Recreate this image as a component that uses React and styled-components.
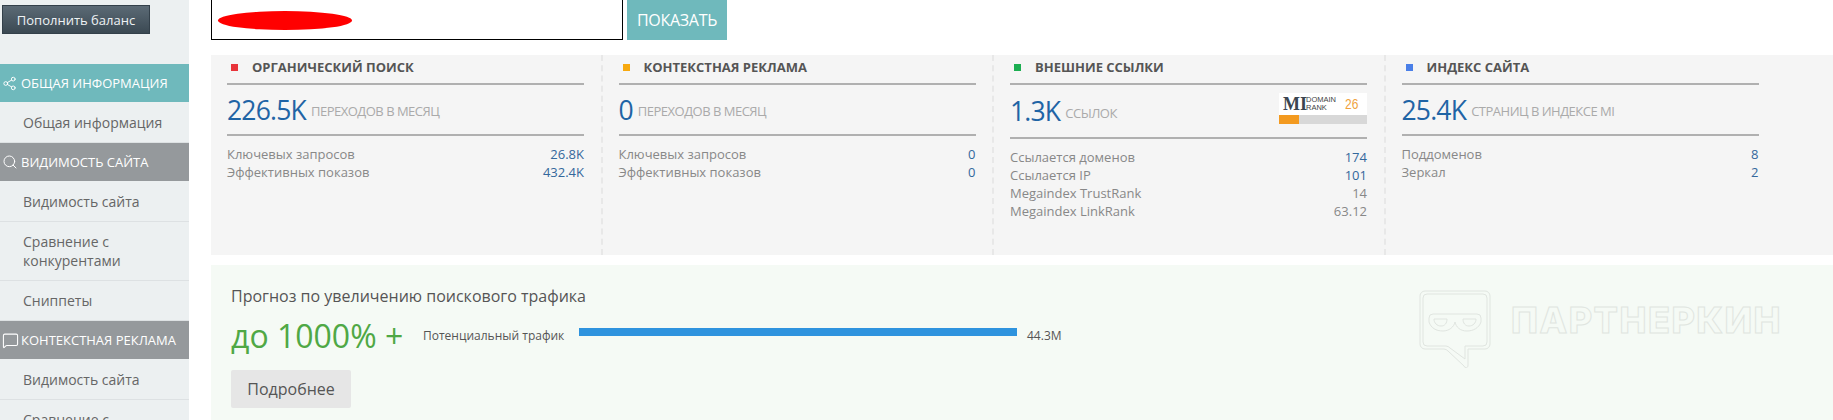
import React from 'react'
import styled, { createGlobalStyle } from 'styled-components'
import { Share2, Search, MessageSquare } from 'lucide-react'

const GlobalStyle = createGlobalStyle`
  html, body {
    margin: 0;
    height: 420px;
    overflow: hidden;
    background: #fff;
    font-family: "Open Sans", "Liberation Sans", sans-serif;
  }
  * { box-sizing: border-box; }
`

const Page = styled.div`
  display: flex;
  width: 1833px;
  height: 420px;
  overflow: hidden;
`

const Sidebar = styled.aside`
  width: 189px;
  flex-shrink: 0;
  background: #ecf0f1;
  padding-top: 5px;
`

const BalanceButton = styled.button`
  display: block;
  width: 148px;
  height: 29px;
  margin: 0 0 30px 2px;
  padding: 0;
  border: 1px solid #33404a;
  background: linear-gradient(#5b6a75, #3b4953);
  color: #eef2f4;
  font: 13px "Open Sans", sans-serif;
`

const MenuHeader = styled.div`
  display: flex;
  align-items: center;
  height: 38px;
  padding-left: 2px;
  background: ${props => (props.$active ? '#6fb9bc' : '#95999c')};
  color: #fff;
  font-size: 13px;
  white-space: nowrap;
`

const IconSlot = styled.span`
  display: flex;
  width: 19px;
`

const MenuItem = styled.div`
  padding: ${props => (props.$first ? '11px' : '10px')} 10px 10px 23px;
  border-bottom: 1px solid #dde1e3;
  color: #666;
  font-size: 14px;
  line-height: 19px;
`

const Content = styled.main`
  flex: 1;
  min-width: 0;
  padding-left: 22px;
`

const TopBar = styled.div`
  display: flex;
  gap: 4px;
  height: 40px;
  margin-bottom: 15px;
`

const SiteInput = styled.div`
  position: relative;
  width: 412px;
  background: #fff;
  border: 1px solid #000;
  border-top: none;
`

const Scribble = styled.span`
  position: absolute;
  left: 6px;
  top: 11px;
  width: 134px;
  height: 19px;
  border-radius: 50%;
  background: #f00;
`

const ShowButton = styled.button`
  width: 100px;
  border: none;
  padding: 0;
  background: #6fb9bc;
  color: #fff;
  font: 16px "Open Sans", sans-serif;
  letter-spacing: -0.3px;
`

const StatsPanel = styled.section`
  display: grid;
  grid-template-columns: repeat(4, 391.5px);
  height: 200px;
  margin-bottom: 10px;
  background: #f5f5f5;
`

const StatColumn = styled.div`
  padding: 0 16.5px 0 16px;
  border-right: 2px dashed ${props => (props.$last ? 'transparent' : '#e8e8e8')};
`

const StatTitle = styled.h3`
  display: flex;
  align-items: center;
  gap: 14px;
  height: 30px;
  margin: 0;
  padding: 0 0 4px 4px;
  border-bottom: 2px solid #b0b0b0;
  color: #555;
  font-size: 13px;
  font-weight: 700;
  line-height: 24px;
`

const Marker = styled.i`
  width: 7px;
  height: 7px;
  background: ${props => props.$color};
`

const Summary = styled.div`
  display: flex;
  justify-content: space-between;
  align-items: center;
  height: ${props => (props.$tall ? '54px' : '51px')};
  border-bottom: 2px solid #b0b0b0;
`

const SummaryText = styled.div`
  display: flex;
  align-items: center;
  gap: 5px;
`

const BigNumber = styled.span`
  color: #1f64a5;
  font-size: 26.5px;
  letter-spacing: -0.8px;
`

const BigLabel = styled.span`
  padding-top: 3px;
  color: #aaa;
  font-size: 13px;
  letter-spacing: -0.5px;
`

const DetailList = styled.div`
  padding-top: 9px;
`

const DetailRow = styled.div`
  display: flex;
  justify-content: space-between;
  color: #888;
  font-size: 13px;
  line-height: 18px;
`

const DetailValue = styled.span`
  color: ${props => (props.$muted ? '#888' : '#34689c')};
`

const RankBadge = styled.div`
  display: flex;
  flex-direction: column;
  width: 88px;
  height: 31px;
  margin-bottom: 5px;
  background: #fff;
`

const RankTop = styled.div`
  flex: 1;
  display: flex;
  align-items: center;
  padding-left: 4px;
`

const RankMark = styled.span`
  width: 23px;
  color: #3a4550;
  font: 700 18px "Liberation Serif", serif;
`

const RankCaption = styled.span`
  width: 39px;
  color: #444;
  font: 7.5px/8px "Liberation Sans", sans-serif;
`

const RankValue = styled.span`
  color: #f0a23c;
  font: 12px "Liberation Sans", sans-serif;
  transform: scaleY(1.2);
`

const RankTrack = styled.div`
  height: 9px;
  background: #d8d8d8;
`

const RankFill = styled.div`
  height: 100%;
  background: #f39a20;
`

const ForecastPanel = styled.section`
  position: relative;
  height: 155px;
  padding: 21px 20px 0 20px;
  background: #f5faf5;
`

const ForecastTitle = styled.div`
  color: #555;
  font-size: 16px;
  line-height: 20px;
`

const ForecastRow = styled.div`
  display: flex;
  align-items: center;
  height: 40px;
  margin: 9px 0 15px;
`

const ForecastValue = styled.span`
  width: 192px;
  color: #4fa845;
  font-size: 32px;
  white-space: nowrap;
`

const TrafficLabel = styled.span`
  width: 156px;
  color: #555;
  font-size: 12px;
  white-space: nowrap;
`

const TrafficBar = styled.div`
  width: 438px;
  height: 8px;
  margin: 0 10px 7px 0;
  background: #2e93de;
`

const TrafficValue = styled.span`
  color: #555;
  font-size: 12px;
`

const MoreButton = styled.button`
  display: block;
  width: 120px;
  height: 38px;
  padding: 0;
  border: none;
  border-radius: 2px;
  background: #e6e6e6;
  color: #555;
  font: 16px "Open Sans", sans-serif;
`

const Watermark = styled.div`
  position: absolute;
  left: 1208px;
  top: 25px;
  display: flex;
  gap: 20px;
`

const WatermarkText = styled.span`
  margin-top: 8px;
  color: transparent;
  font: 800 36px/44px Inter, sans-serif;
  letter-spacing: 1.5px;
  -webkit-text-stroke: 1px #e0e5e0;
`

const stats = [
  {
    title: 'ОРГАНИЧЕСКИЙ ПОИСК',
    color: '#e8343a',
    value: '226.5K',
    label: 'ПЕРЕХОДОВ В МЕСЯЦ',
    rows: [['Ключевых запросов', '26.8K'], ['Эффективных показов', '432.4K']]
  },
  {
    title: 'КОНТЕКСТНАЯ РЕКЛАМА',
    color: '#f7a90f',
    value: '0',
    label: 'ПЕРЕХОДОВ В МЕСЯЦ',
    rows: [['Ключевых запросов', '0'], ['Эффективных показов', '0']]
  },
  {
    title: 'ВНЕШНИЕ ССЫЛКИ',
    color: '#1cae51',
    value: '1.3K',
    label: 'ССЫЛОК',
    badge: true,
    rows: [
      ['Ссылается доменов', '174'],
      ['Ссылается IP', '101'],
      ['Megaindex TrustRank', '14', true],
      ['Megaindex LinkRank', '63.12', true]
    ]
  },
  {
    title: 'ИНДЕКС САЙТА',
    color: '#4a7fe8',
    value: '25.4K',
    label: 'СТРАНИЦ В ИНДЕКСЕ MI',
    rows: [['Поддоменов', '8'], ['Зеркал', '2']]
  }
]

const WatermarkLogo = () => (
  <svg width="72" height="78" viewBox="0 0 72 78" fill="none" stroke="#e0e5e0">
    <path d="M6 1h60a5 5 0 0 1 5 5v48a5 5 0 0 1-5 5H49v16a2 2 0 0 1-4 1L29 61a6 6 0 0 0-4-2H6a5 5 0 0 1-5-5V6a5 5 0 0 1 5-5z" />
    <path d="M8 4h56a4 4 0 0 1 4 4v44a4 4 0 0 1-4 4H46v13L31 58a6 6 0 0 0-4-2H8a4 4 0 0 1-4-4V8a4 4 0 0 1 4-4z" />
    <path d="M14 24h44a4 4 0 0 1 4 4v4c-2 6-8 9-14 9-7 0-11-4-12-9-1 5-6 9-12 9-7 0-12-3-14-9v-4a4 4 0 0 1 4-4z" />
    <path d="M15 29h13c0 4-2 7-6 7s-7-3-7-7zM44 29h13c0 4-3 7-7 7s-6-3-6-7z" />
  </svg>
)

const App = () => (
  <>
    <GlobalStyle />
    <Page>
      <Sidebar>
        <BalanceButton>Пополнить баланс</BalanceButton>
        <MenuHeader $active>
          <IconSlot>
            <Share2 size={15} strokeWidth={1.5} />
          </IconSlot>
          ОБЩАЯ ИНФОРМАЦИЯ
        </MenuHeader>
        <MenuItem $first>Общая информация</MenuItem>
        <MenuHeader>
          <IconSlot>
            <Search size={16} strokeWidth={1.5} />
          </IconSlot>
          ВИДИМОСТЬ САЙТА
        </MenuHeader>
        <MenuItem $first>Видимость сайта</MenuItem>
        <MenuItem>Сравнение с конкурентами</MenuItem>
        <MenuItem>Сниппеты</MenuItem>
        <MenuHeader>
          <IconSlot>
            <MessageSquare size={17} strokeWidth={1.5} />
          </IconSlot>
          КОНТЕКСТНАЯ РЕКЛАМА
        </MenuHeader>
        <MenuItem $first>Видимость сайта</MenuItem>
        <MenuItem>Сравнение с конкурентами</MenuItem>
      </Sidebar>
      <Content>
        <TopBar>
          <SiteInput>
            <Scribble />
          </SiteInput>
          <ShowButton>ПОКАЗАТЬ</ShowButton>
        </TopBar>
        <StatsPanel>
          {stats.map((stat, i) => (
            <StatColumn key={stat.title} $last={i === stats.length - 1}>
              <StatTitle>
                <Marker $color={stat.color} />
                {stat.title}
              </StatTitle>
              <Summary $tall={stat.badge}>
                <SummaryText>
                  <BigNumber>{stat.value}</BigNumber>
                  <BigLabel>{stat.label}</BigLabel>
                </SummaryText>
                {stat.badge && (
                  <RankBadge>
                    <RankTop>
                      <RankMark>MI</RankMark>
                      <RankCaption>
                        DOMAIN
                        <br />
                        RANK
                      </RankCaption>
                      <RankValue>26</RankValue>
                    </RankTop>
                    <RankTrack>
                      <RankFill style={{ width: `${(26 / 115) * 100}%` }} />
                    </RankTrack>
                  </RankBadge>
                )}
              </Summary>
              <DetailList>
                {stat.rows.map(([name, value, muted]) => (
                  <DetailRow key={name}>
                    {name}
                    <DetailValue $muted={muted}>{value}</DetailValue>
                  </DetailRow>
                ))}
              </DetailList>
            </StatColumn>
          ))}
        </StatsPanel>
        <ForecastPanel>
          <ForecastTitle>Прогноз по увеличению поискового трафика</ForecastTitle>
          <ForecastRow>
            <ForecastValue>до 1000% +</ForecastValue>
            <TrafficLabel>Потенциальный трафик</TrafficLabel>
            <TrafficBar />
            <TrafficValue>44.3M</TrafficValue>
          </ForecastRow>
          <MoreButton>Подробнее</MoreButton>
          <Watermark>
            <WatermarkLogo />
            <WatermarkText>ПАРТНЕРКИН</WatermarkText>
          </Watermark>
        </ForecastPanel>
      </Content>
    </Page>
  </>
)

export default App
